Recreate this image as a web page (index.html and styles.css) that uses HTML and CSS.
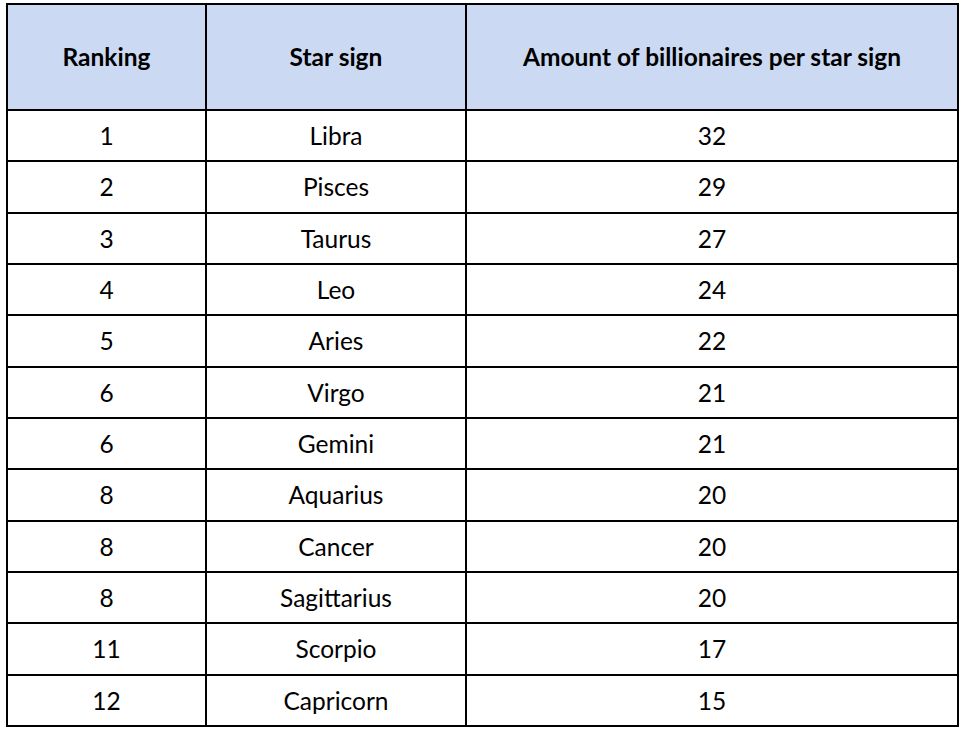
FILE: index.html
```html
<!DOCTYPE html>
<html lang="en">
<head>
<meta charset="utf-8">
<title>Billionaires per star sign</title>
<link rel="stylesheet" href="styles.css">
</head>
<body>
<table class="ranking">
  <colgroup>
    <col class="c1">
    <col class="c2">
    <col class="c3">
  </colgroup>
  <thead>
    <tr class="head">
      <th>Ranking</th>
      <th>Star sign</th>
      <th>Amount of billionaires per star sign</th>
    </tr>
  </thead>
  <tbody>
    <tr><td>1</td><td>Libra</td><td>32</td></tr>
    <tr><td>2</td><td>Pisces</td><td>29</td></tr>
    <tr><td>3</td><td>Taurus</td><td>27</td></tr>
    <tr><td>4</td><td>Leo</td><td>24</td></tr>
    <tr><td>5</td><td>Aries</td><td>22</td></tr>
    <tr><td>6</td><td>Virgo</td><td>21</td></tr>
    <tr><td>6</td><td>Gemini</td><td>21</td></tr>
    <tr><td>8</td><td>Aquarius</td><td>20</td></tr>
    <tr><td>8</td><td>Cancer</td><td>20</td></tr>
    <tr><td>8</td><td>Sagittarius</td><td>20</td></tr>
    <tr><td>11</td><td>Scorpio</td><td>17</td></tr>
    <tr><td>12</td><td>Capricorn</td><td>15</td></tr>
  </tbody>
</table>
</body>
</html>
```
FILE: styles.css
```css
html, body {
  margin: 0;
  padding: 0;
  background: #ffffff;
}
body {
  padding: 3px 0 0 6px;
  font-family: Lato, "Open Sans", "Liberation Sans", sans-serif;
  color: #000000;
}
.ranking {
  border-collapse: collapse;
  table-layout: fixed;
  width: 951px;
  border: 2px solid #000;
}
.c1 { width: 199px; }
.c2 { width: 260px; }
.c3 { width: 492px; }
.ranking th,
.ranking td {
  border: 2px solid #000;
  text-align: center;
  vertical-align: middle;
  padding: 0;
  line-height: 1.2;
}
.ranking th {
  background: #cbd9f2;
  font-weight: 700;
  font-size: 24.5px;
  height: 104px;
}
.ranking td {
  font-size: 24.5px;
  height: 49.33px;
}
```
